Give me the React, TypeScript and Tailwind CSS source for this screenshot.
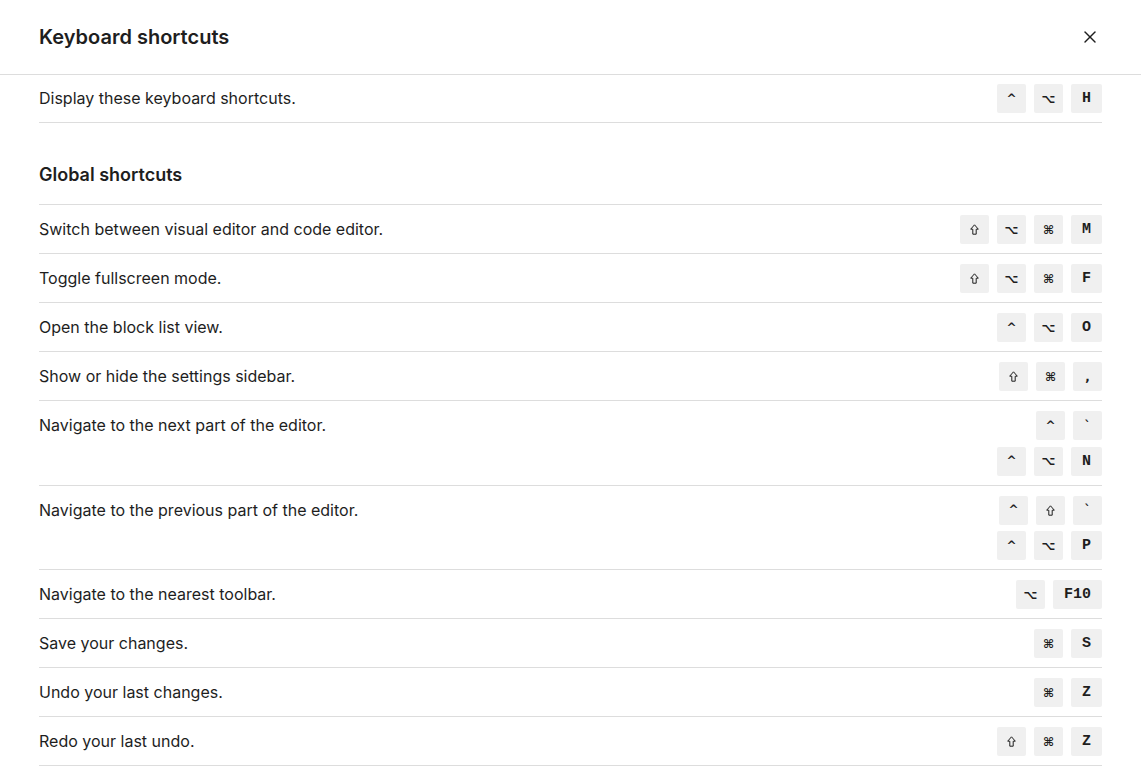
import { X } from "lucide-react";

type Shortcut = { label: string; keys: string[][] };

const SYMBOLS = ["^", "⌥", "⌘", "⇧", "`", ","];

const globalShortcuts: Shortcut[] = [
  { label: "Switch between visual editor and code editor.", keys: [["⇧", "⌥", "⌘", "M"]] },
  { label: "Toggle fullscreen mode.", keys: [["⇧", "⌥", "⌘", "F"]] },
  { label: "Open the block list view.", keys: [["^", "⌥", "O"]] },
  { label: "Show or hide the settings sidebar.", keys: [["⇧", "⌘", ","]] },
  { label: "Navigate to the next part of the editor.", keys: [["^", "`"], ["^", "⌥", "N"]] },
  { label: "Navigate to the previous part of the editor.", keys: [["^", "⇧", "`"], ["^", "⌥", "P"]] },
  { label: "Navigate to the nearest toolbar.", keys: [["⌥", "F10"]] },
  { label: "Save your changes.", keys: [["⌘", "S"]] },
  { label: "Undo your last changes.", keys: [["⌘", "Z"]] },
  { label: "Redo your last undo.", keys: [["⇧", "⌘", "Z"]] },
];

// shift arrow drawn by hand, the fonts here only have it as a colour emoji
function ShiftGlyph() {
  return (
    <svg width="9" height="11" viewBox="0 0 9 11" fill="none" stroke="#1e1e1e" strokeWidth="1">
      <path d="M4.5 0.8 L8.3 5.2 H6.2 V10.2 H2.8 V5.2 H0.7 Z" strokeLinejoin="miter" />
    </svg>
  );
}

function Key({ k }: { k: string }) {
  const symbol = SYMBOLS.includes(k);
  return (
    <kbd
      className={
        symbol
          ? "flex h-[29px] w-[29px] items-center justify-center rounded-[2px] bg-[#f0f0f0] font-['DejaVu_Sans',sans-serif] text-[12px] font-bold text-[#1e1e1e]"
          : "flex h-[29px] min-w-[29px] items-center justify-center rounded-[2px] bg-[#f0f0f0] px-[11px] pt-[2px] font-['Liberation_Mono',monospace] text-[15px] font-bold text-[#1e1e1e]"
      }
    >
      {k === "⇧" ? <ShiftGlyph /> : k}
    </kbd>
  );
}

function KeyCombos({ keys }: { keys: string[][] }) {
  return (
    <div className="flex flex-col items-end gap-[6.5px]">
      {keys.map((combo, i) => (
        <div key={i} className="flex gap-[8px]">
          {combo.map((k, j) => (
            <Key key={j} k={k} />
          ))}
        </div>
      ))}
    </div>
  );
}

function Row({ s }: { s: Shortcut }) {
  return (
    <li className="flex items-start justify-between border-t border-[#dddddd] pb-[9px] pt-[10px]">
      <span className="leading-[29px]">{s.label}</span>
      <KeyCombos keys={s.keys} />
    </li>
  );
}

export default function App() {
  return (
    <div className="min-h-screen bg-white font-['Inter',sans-serif] text-[16px] text-[#1e1e1e]">
      <header className="flex h-[75px] items-center justify-between border-b border-[#dddddd] pl-[39px] pr-[41px]">
        <h1 className="text-[20px] font-semibold">Keyboard shortcuts</h1>
        <button className="text-[#1e1e1e]">
          <X size={20} strokeWidth={1.7} />
        </button>
      </header>
      <div className="px-[39px]">
        <div className="flex items-start justify-between border-b border-[#dddddd] pb-[9px] pt-[9px]">
          <span className="leading-[29px]">Display these keyboard shortcuts.</span>
          <KeyCombos keys={[["^", "⌥", "H"]]} />
        </div>
        <h2 className="mb-[17px] mt-[40px] text-[18px] font-semibold leading-[24px]">Global shortcuts</h2>
        <ul className="border-b border-[#dddddd]">
          {globalShortcuts.map((s) => (
            <Row key={s.label} s={s} />
          ))}
        </ul>
      </div>
    </div>
  );
}
